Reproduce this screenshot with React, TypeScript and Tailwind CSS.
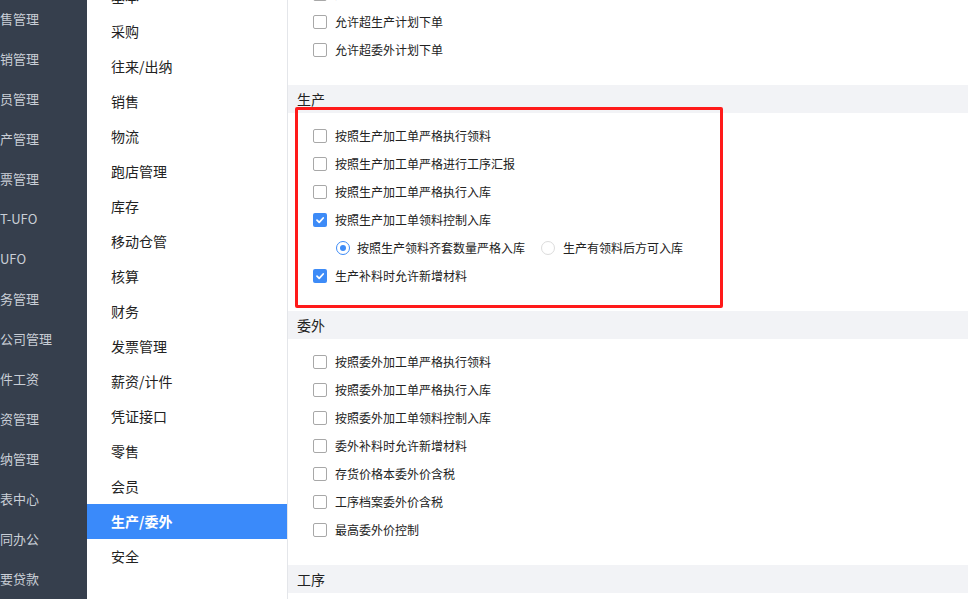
import React from 'react'

const FONT = '"Noto Sans CJK SC", "Noto Sans", "Liberation Sans", sans-serif'

const mainMenu = [
  '销售管理', '营销管理', '会员管理', '生产管理', '发票管理', '用T-UFO', '用UFO',
  '财务管理', '分公司管理', '计件工资', '工资管理', '出纳管理', '报表中心', '协同办公', '重要贷款',
]

const subMenu = [
  '基本', '采购', '往来/出纳', '销售', '物流', '跑店管理', '库存', '移动仓管', '核算',
  '财务', '发票管理', '薪资/计件', '凭证接口', '零售', '会员', '生产/委外', '安全',
]

function Checkbox({ checked }: { checked?: boolean }) {
  if (checked) {
    return (
      <span className="w-[14px] h-[14px] rounded-[2px] bg-[#3d8bf7] flex items-center justify-center shrink-0">
        <svg width="10" height="10" viewBox="0 0 10 10" fill="none">
          <path d="M2 5.2 L4.2 7.3 L8.2 3" stroke="#fff" strokeWidth="1.8" strokeLinecap="round" strokeLinejoin="round" />
        </svg>
      </span>
    )
  }
  return <span className="w-[14px] h-[14px] rounded-[2px] border border-[#a8a8a8] bg-white shrink-0" />
}

function Radio({ checked }: { checked?: boolean }) {
  return (
    <span
      className={
        'w-[14px] h-[14px] rounded-full border bg-white flex items-center justify-center shrink-0 ' +
        (checked ? 'border-[#3d8bf7]' : 'border-[#dcdcdc]')
      }
    >
      {checked && <span className="w-[6px] h-[6px] rounded-full bg-[#3d8bf7]" />}
    </span>
  )
}

function Row({ label, checked }: { label: string; checked?: boolean }) {
  return (
    <div className="h-[28px] flex items-center pl-[25px] gap-[8px] text-[12px] text-[#222]">
      <Checkbox checked={checked} />
      <span>{label}</span>
    </div>
  )
}

function Header({ title }: { title: string }) {
  return (
    <div className="h-[28px] bg-[#f2f3f6] flex items-center pl-[9px] text-[14px] text-[#222]">
      {title}
    </div>
  )
}

export default function App() {
  return (
    <div className="w-[968px] h-[599px] flex overflow-hidden bg-white" style={{ fontFamily: FONT }}>
      {/* 主菜单 */}
      <div className="w-[87px] h-full bg-[#363f4d] overflow-hidden shrink-0">
        <div className="-ml-[13px] -mt-[1px] whitespace-nowrap">
          {mainMenu.map(m => (
            <div key={m} className="h-[40px] flex items-center text-[13px] text-[#c9ced6]">
              {m}
            </div>
          ))}
        </div>
      </div>

      {/* 子菜单 */}
      <div className="w-[201px] h-full border-r border-[#e4e6ea] overflow-hidden shrink-0">
        <div className="-mt-[21px]">
          {subMenu.map(m => {
            const active = m === '生产/委外'
            return (
              <div
                key={m}
                className={
                  'h-[35px] flex items-center pl-[24px] text-[14px] ' +
                  (active ? 'bg-[#3a8afa] text-white font-bold' : 'text-[#222]')
                }
              >
                {m}
              </div>
            )
          })}
        </div>
      </div>

      {/* 设置内容 */}
      <div className="flex-1 h-full overflow-hidden relative">
        <div className="-mt-[20px]">
          <div className="pb-[21px]">
            <Row label="允许负库存下单" />
            <Row label="允许超生产计划下单" />
            <Row label="允许超委外计划下单" />
          </div>

          <Header title="生产" />
          <div className="pt-[9px] pb-[21px]">
            <Row label="按照生产加工单严格执行领料" />
            <Row label="按照生产加工单严格进行工序汇报" />
            <Row label="按照生产加工单严格执行入库" />
            <Row label="按照生产加工单领料控制入库" checked />
            <div className="h-[28px] flex items-center pl-[48px] text-[12px] text-[#222]">
              <Radio checked />
              <span className="ml-[7px]">按照生产领料齐套数量严格入库</span>
              <span className="ml-[16px]"><Radio /></span>
              <span className="ml-[8px]">生产有领料后方可入库</span>
            </div>
            <Row label="生产补料时允许新增材料" checked />
          </div>

          <Header title="委外" />
          <div className="pt-[9px] pb-[21px]">
            <Row label="按照委外加工单严格执行领料" />
            <Row label="按照委外加工单严格执行入库" />
            <Row label="按照委外加工单领料控制入库" />
            <Row label="委外补料时允许新增材料" />
            <Row label="存货价格本委外价含税" />
            <Row label="工序档案委外价含税" />
            <Row label="最高委外价控制" />
          </div>

          <Header title="工序" />
        </div>

        {/* 标注框 */}
        <div className="absolute left-[7px] top-[107px] w-[428px] h-[201px] border-[3px] border-[#ff1a1a] rounded-[2px] pointer-events-none" />
      </div>
    </div>
  )
}
